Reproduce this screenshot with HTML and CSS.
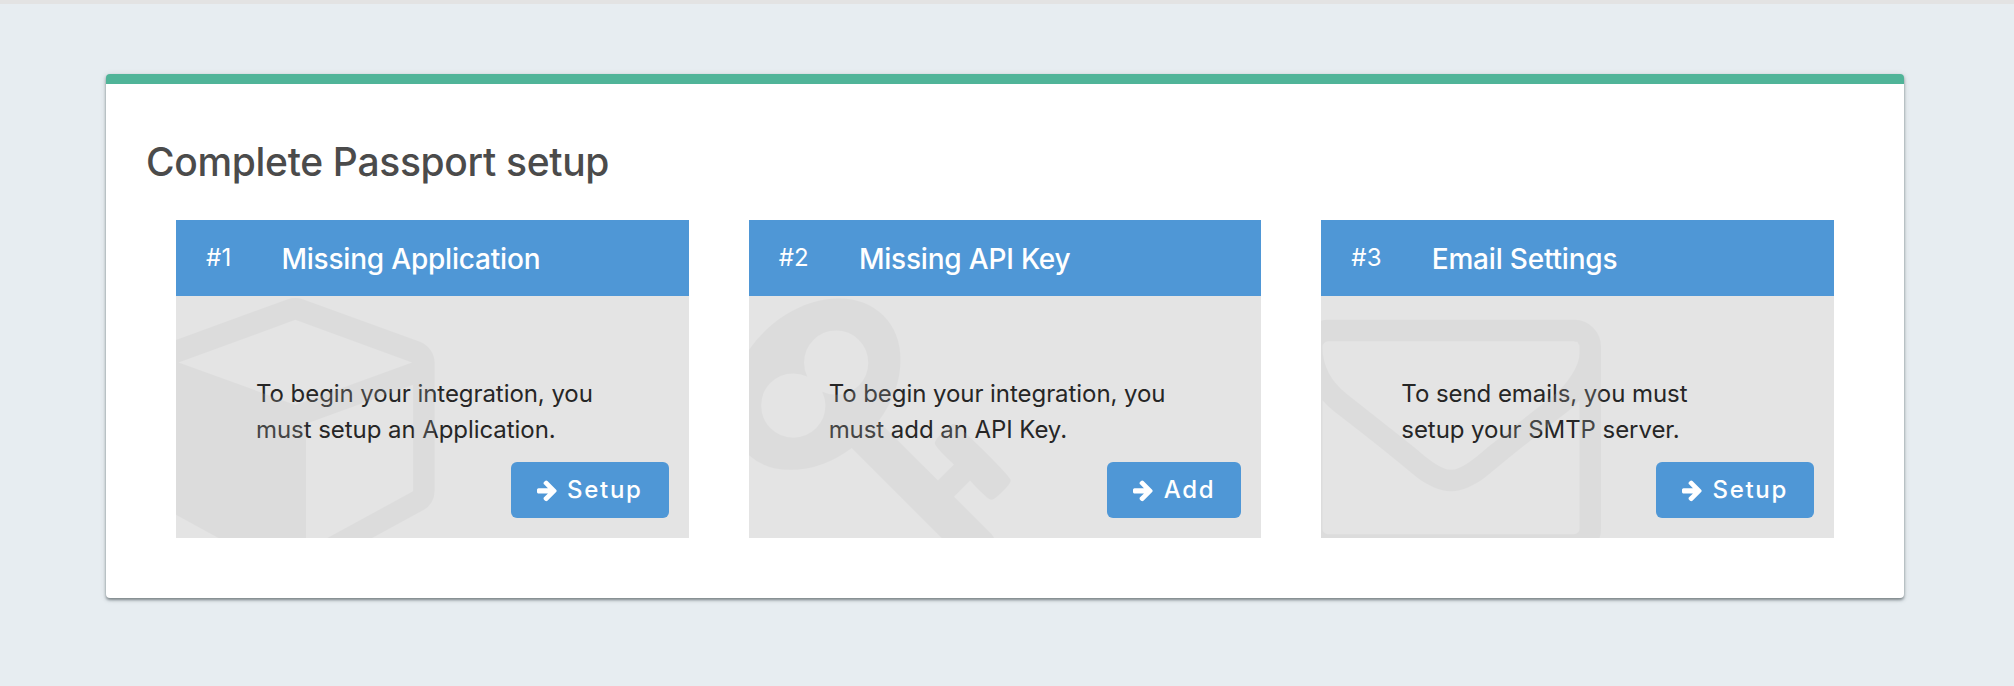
FILE: index.html
```
<!DOCTYPE html>
<html lang="en">
<head>
<meta charset="utf-8">
<title>Complete Passport setup</title>
<link rel="stylesheet" href="styles.css">
</head>
<body>
<svg class="defs" aria-hidden="true">
  <symbol id="arrow" viewBox="0 -1536 1536 1792"><path transform="scale(1,-1)" d="M1472 576q0 -54 -37 -91l-651 -651q-39 -37 -91 -37q-51 0 -90 37l-75 75q-38 38 -38 91t38 91l293 293h-704q-52 0 -84.5 37.5t-32.5 90.5v128q0 53 32.5 90.5t84.5 37.5h704l-293 294q-38 36 -38 90t38 90l75 75q38 38 90 38q53 0 91 -38l651 -651q37 -35 37 -90z"/></symbol>
</svg>
<main class="panel">
  <h2 class="panel-title">Complete Passport setup</h2>
  <div class="cards">
    <section class="card">
      <header class="card-header"><span class="number">#1</span><h3 class="card-title">Missing Application</h3></header>
      <div class="card-body">
        <p class="message">To begin your integration, you must setup an Application.</p>
        <a class="button"><svg class="arrow"><use href="#arrow"/></svg><span>Setup</span></a>
        <svg class="watermark" viewBox="0 -1536 1792 1792"><path transform="scale(1,-1)" d="M896 -93l640 349v636l-640 -233v-752zM832 772l698 254l-698 254l-698 -254zM1664 1024v-768q0 -35 -18 -65t-49 -47l-704 -384q-28 -16 -61 -16t-61 16l-704 384q-31 17 -49 47t-18 65v768q0 40 23 73t61 50l704 256q22 8 44 8t44 -8l704 -256q38 -17 61 -50t23 -73z"/></svg>
      </div>
    </section>
    <section class="card">
      <header class="card-header"><span class="number">#2</span><h3 class="card-title">Missing API Key</h3></header>
      <div class="card-body">
        <p class="message">To begin your integration, you must add an API Key.</p>
        <a class="button"><svg class="arrow"><use href="#arrow"/></svg><span>Add</span></a>
        <svg class="watermark" viewBox="0 -1536 1792 1792"><path transform="scale(1,-1)" d="M832 1024q0 80 -56 136t-136 56t-136 -56t-56 -136q0 -42 19 -83q-41 19 -83 19q-80 0 -136 -56t-56 -136t56 -136t136 -56t136 56t56 136q0 42 -19 83q41 -19 83 -19q80 0 136 56t56 136zM1683 320q0 -17 -49 -66t-66 -49q-9 0 -28.5 16t-36.5 33t-38.5 40t-24.5 26l-96 -96l220 -220q28 -28 28 -68q0 -42 -39 -81t-81 -39q-40 0 -68 28l-671 671q-176 -131 -365 -131q-163 0 -265.5 102.5t-102.5 265.5q0 160 95 313t248 248t313 95q163 0 265.5 -102.5t102.5 -265.5q0 -189 -131 -365l355 -355l96 96q-3 3 -26 24.5t-40 38.5t-33 36.5t-16 28.5q0 17 49 66t66 49q13 0 23 -10q6 -6 46 -44.5t82 -79.5t86.5 -86t73 -78t28.5 -41z"/></svg>
      </div>
    </section>
    <section class="card">
      <header class="card-header"><span class="number">#3</span><h3 class="card-title">Email Settings</h3></header>
      <div class="card-body">
        <p class="message">To send emails, you must setup your SMTP server.</p>
        <a class="button"><svg class="arrow"><use href="#arrow"/></svg><span>Setup</span></a>
        <svg class="watermark" viewBox="0 -1536 1792 1792"><path transform="scale(1,-1)" d="M1664 32v768q-32 -36 -69 -66q-268 -206 -426 -338q-51 -43 -83 -67t-86.5 -48.5t-102.5 -24.5h-1h-1q-48 0 -102.5 24.5t-86.5 48.5t-83 67q-158 132 -426 338q-37 30 -69 66v-768q0 -13 9.5 -22.5t22.5 -9.5h1472q13 0 22.5 9.5t9.5 22.5zM1664 1083v11v13.5t-0.5 13t-3 12.5t-5.5 9t-9 7.5t-14 2.5h-1472q-13 0 -22.5 -9.5t-9.5 -22.5q0 -168 147 -284q193 -152 401 -317q6 -5 35 -29.5t46 -37.5t44.5 -31.5t50.5 -27.5t43 -9h1h1q20 0 43 9t50.5 27.5t44.5 31.5t46 37.5t35 29.5q208 165 401 317q54 43 100.5 115.5t46.5 131.5zM1792 1120v-1088q0 -66 -47 -113t-113 -47h-1472q-66 0 -113 47t-47 113v1088q0 66 47 113t113 47h1472q66 0 113 -47t47 -113z"/></svg>
      </div>
    </section>
  </div>
</main>
</body>
</html>
```
FILE: styles.css
```
* { box-sizing: border-box; }
body {
  margin: 0;
  min-height: 686px;
  padding: 70px 110px 88px 106px;
  border-top: 4px solid #e3e3e3;
  background: #e7edf1;
  font-family: Inter, sans-serif;
  color: #262626;
}
.defs { display: none; }
.panel {
  height: 524px;
  padding: 52px 40px 60px;
  border-top: 10px solid #50b498;
  border-radius: 4px;
  background: #fff;
  box-shadow: 0 2px 3px rgba(60, 72, 76, .6), 0 1px 6px rgba(60, 72, 76, .15);
}
.panel-title {
  margin: 0 0 32px;
  font-size: 39px;
  line-height: 52px;
  font-weight: 500;
  letter-spacing: -.33px;
  color: #4b4b4b;
}
.cards {
  display: grid;
  grid-template-columns: repeat(3, 1fr);
  gap: 60px;
  padding: 0 30px;
}
.card-header {
  display: flex;
  align-items: center;
  gap: 50px;
  height: 76px;
  padding: 0 30px;
  background: #4f97d6;
  color: #fff;
}
.number {
  padding-bottom: 2px;
  font-size: 24px;
  letter-spacing: .2px;
}
.card-title {
  margin: 0;
  padding-top: 1px;
  font-size: 28px;
  font-weight: 500;
  letter-spacing: -.2px;
}
.card-body {
  position: relative;
  display: flex;
  flex-direction: column;
  height: 242px;
  padding: 80px 20px 20px 80px;
  overflow: hidden;
  background: #e4e4e4;
}
.message {
  width: 352px;
  margin: 0;
  font-size: 24px;
  line-height: 36px;
  letter-spacing: -.06px;
}
.button {
  position: relative;
  z-index: 1;
  display: flex;
  flex-shrink: 0;
  align-items: center;
  gap: 10px;
  align-self: flex-end;
  height: 56px;
  margin-top: auto;
  padding: 0 26px;
  border-radius: 6px;
  background: #4f97d6;
  color: #fff;
  font-size: 24px;
  font-weight: 500;
  line-height: 28px;
  letter-spacing: 1.7px;
}
.button span { padding-bottom: 1px; }
.arrow { width: 20.5px; height: 24px; fill: currentColor; }
.watermark {
  position: absolute;
  top: -19px;
  left: -20px;
  width: 300px;
  height: 300px;
  fill: #c0c0c0;
  opacity: .2;
}
```
